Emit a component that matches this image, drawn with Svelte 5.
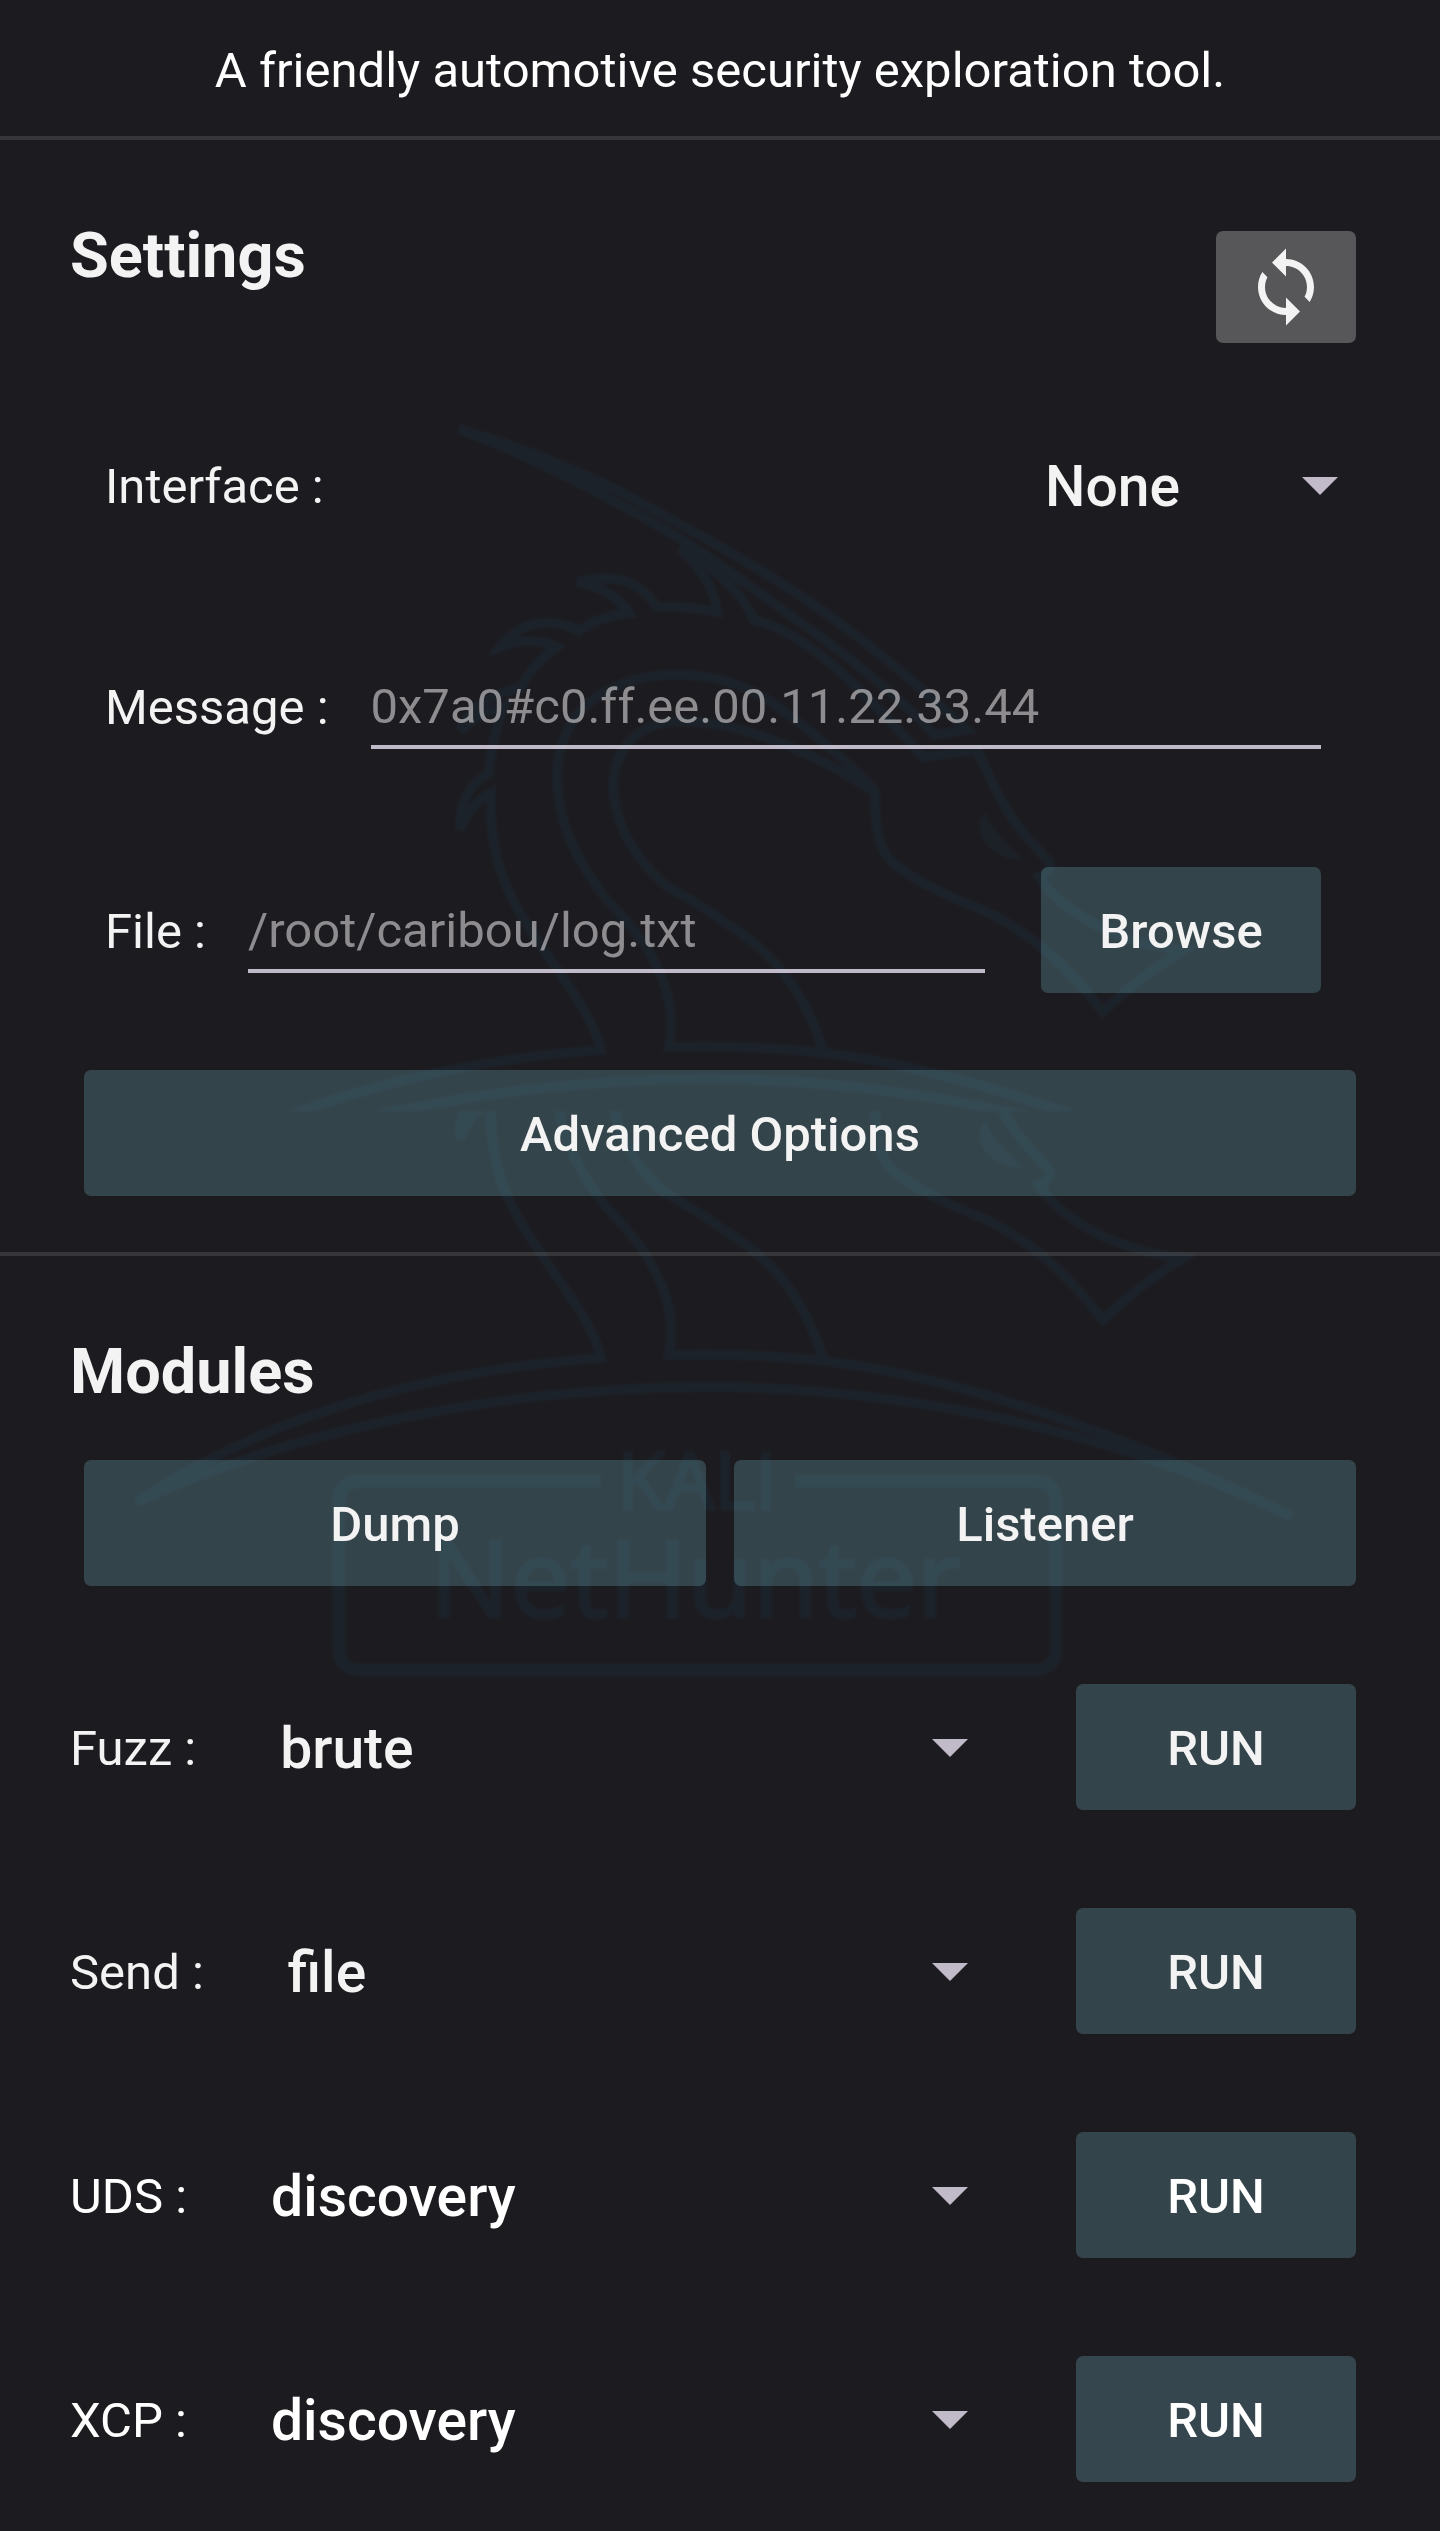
<script>
  const modules = [
    { id: 'fuzz', label: 'Fuzz :', options: ['brute', 'identify', 'mutate', 'random'] },
    { id: 'send', label: 'Send :', options: ['file', 'message'] },
    { id: 'uds', label: 'UDS :', options: ['discovery', 'services', 'testerpresent'] },
    { id: 'xcp', label: 'XCP :', options: ['discovery', 'info', 'dump'] }
  ];
</script>

{#snippet picker(id, options)}
  <span class="picker">
    <select {id}>
      {#each options as option}
        <option>{option}</option>
      {/each}
    </select>
    <svg class="arrow" viewBox="0 0 36 18" aria-hidden="true"><path d="M0 0h36L18 18z" /></svg>
  </span>
{/snippet}

<div class="page">
  <header>A friendly automotive security exploration tool.</header>

  <section>
    <div class="head">
      <h2>Settings</h2>
      <button class="refresh" aria-label="Refresh">
        <svg viewBox="0 0 24 24" aria-hidden="true">
          <path d="M12 4V1L8 5l4 4V6c3.31 0 6 2.69 6 6 0 1.01-.25 1.97-.7 2.8l1.46 1.46C19.54 15.03 20 13.57 20 12c0-4.42-3.58-8-8-8zm0 14c-3.31 0-6-2.69-6-6 0-1.01.25-1.97.7-2.8L5.24 7.74C4.46 8.97 4 10.43 4 12c0 4.42 3.58 8 8 8v3l4-4-4-4v3z" />
        </svg>
      </button>
    </div>

    <div class="fields">
      <div class="row interface">
        <label for="interface">Interface :</label>
        {@render picker('interface', ['None', 'can0', 'vcan0'])}
      </div>
      <div class="row">
        <label for="message">Message :</label>
        <input id="message" type="text" placeholder="0x7a0#c0.ff.ee.00.11.22.33.44" />
      </div>
      <div class="row">
        <label for="file">File :</label>
        <input id="file" type="text" placeholder="/root/caribou/log.txt" />
        <button class="action browse">Browse</button>
      </div>
    </div>

    <div class="buttons"><button class="action">Advanced Options</button></div>
  </section>

  <section>
    <h2>Modules</h2>
    <div class="buttons tools">
      <button class="action">Dump</button>
      <button class="action">Listener</button>
    </div>
    <div class="modules">
      {#each modules as module}
        <div class="row">
          <label for={module.id}>{module.label}</label>
          {@render picker(module.id, module.options)}
          <button class="action">RUN</button>
        </div>
      {/each}
    </div>
  </section>

  <svg class="watermark" viewBox="0 0 1440 2531" aria-hidden="true">
    <defs>
      <clipPath id="upper"><rect width="1440" height="1111" /></clipPath>
      <clipPath id="lower"><rect y="1111" width="1440" height="1420" /></clipPath>
      <g id="dragon">
        <path d="M459 429C514 445 590 473 650 508C721 546 762 570 804 598C867 641 917 684 967 730L935 735C890 688 840 650 794 618C756 590 716 562 679 538C610 497 540 460 459 429Z" />
        <path d="M679 549C709 563 740 588 754 620C804 631 860 686 923 757L977 750C992 783 1005 812 1024 834Q1037 848 1050 863Q1052 871 1039 877C1059 909 1114 943 1183 950Q1140 976 1103 1012C1062 959 1027 932 987 912C951 897 921 885 893 863C877 848 875 825 875 791C860 774 821 737 771 702C723 670 651 665 603 693C566 714 557 752 557 777C557 822 579 865 607 900C636 930 651 951 662 978Q675 1009 669 1047C726 1045 778 1048 824 1053C801 979 763 945 721 920C701 904 680 895 664 884C633 856 613 822 613 782C617 741 644 722 680 721C751 722 825 760 873 791" />
        <path d="M824 1053C950 1068 1120 1122 1292 1209C1121 1124 902 1079 707 1079C500 1079 285 1124 137 1194C249 1119 402 1064 601 1050C593 1012 550 963 527 924C499 882 489 842 491 793Q471 803 460 830Q459 789 489 773C491 747 495 729 504 706Q479 713 460 731Q475 696 521 688Q529 668 557 647Q531 635 500 647C520 620 553 617 579 631Q600 616 629 613Q612 588 577 582C619 572 641 583 657 607Q689 606 717 612Q713 577 679 549" />
        <path class="eye" d="M985 812C992 830 1009 846 1023 860C1000 861 976 844 980 821Z" />
      </g>
    </defs>
    <g clip-path="url(#upper)"><use href="#dragon" /></g>
    <g clip-path="url(#lower)"><use href="#dragon" y="308" /></g>
    <path class="frame" d="M600 1481H361Q339 1481 339 1503V1648Q339 1670 361 1670H1034Q1056 1670 1056 1648V1503Q1056 1481 1034 1481H795" />
    <text x="697" y="1509" font-size="78">KALI</text>
    <text x="695" y="1617" font-size="107">NetHunter</text>
  </svg>
</div>

<style>
  :global(body) {
    margin: 0;
    background: #1c1b1f;
  }
  .page {
    position: relative;
    background: #1c1b1f;
    color: #f3f3f3;
    font: 49px/58px Roboto, sans-serif;
  }
  header {
    padding: 42px 70px 36px;
    border-bottom: 4px solid #363538;
    color: #fff;
    text-align: center;
  }
  section {
    padding: 91px 84px 56px 70px;
  }
  section + section {
    border-top: 4px solid #363538;
    padding-bottom: 49px;
  }
  h2 {
    margin: 0;
    font-size: 63px;
    line-height: 50px;
    font-weight: 700;
  }
  .head {
    display: flex;
    justify-content: space-between;
    align-items: flex-start;
  }
  button {
    border: 0;
    padding: 0;
    border-radius: 7px;
    color: inherit;
    font: 500 49px/58px Roboto, sans-serif;
  }
  .refresh {
    display: flex;
    align-items: center;
    justify-content: center;
    width: 140px;
    height: 112px;
    background: #575759;
  }
  .refresh svg {
    width: 84px;
    height: 84px;
    fill: #f3f3f3;
  }
  .action {
    height: 126px;
    padding-top: 4px;
    background: #34444b;
  }
  .fields,
  .modules {
    display: flex;
    flex-direction: column;
    gap: 98px;
  }
  .fields {
    margin: 76px 35px 77px;
  }
  .row {
    display: flex;
    align-items: center;
    height: 126px;
  }
  label {
    flex: none;
    padding-top: 4px;
    white-space: nowrap;
  }
  input {
    flex: 1;
    min-width: 0;
    height: 86px;
    box-sizing: border-box;
    margin-left: 42px;
    padding: 4px 0 0;
    border: 0;
    border-bottom: 4px solid #c1bac8;
    background: none;
    color: inherit;
    font: inherit;
    outline: 0;
  }
  input::placeholder {
    color: #8e8c8f;
    opacity: 1;
  }
  .browse {
    width: 280px;
    margin-left: 56px;
  }
  .interface {
    justify-content: space-between;
    height: 132px;
    margin: 0 -17px -6px 0;
  }
  .picker {
    display: grid;
    align-items: center;
  }
  .picker > * {
    grid-area: 1 / 1;
  }
  select {
    width: 100%;
    height: 84px;
    padding: 4px 0 0;
    border: 0;
    appearance: none;
    background: none;
    color: inherit;
    font: 500 57px/66px Roboto, sans-serif;
  }
  .arrow {
    justify-self: end;
    width: 36px;
    height: 18px;
    margin-top: 2px;
    fill: #c1bac8;
    pointer-events: none;
  }
  .interface .picker {
    width: 293px;
  }
  .buttons {
    display: grid;
    margin-left: 14px;
  }
  .tools {
    grid-template-columns: 1fr 1fr;
    gap: 28px;
    margin-top: 63px;
    margin-bottom: 98px;
  }
  .modules .picker {
    flex: 1;
    margin: 0 108px 0 84px;
  }
  .modules .action {
    width: 280px;
  }
  .modules .row:nth-child(n + 3) {
    color: #fff;
  }
  .modules .row:last-child .action {
    background: #36464e;
  }
  .watermark {
    position: absolute;
    top: 0;
    left: 0;
    width: 100%;
    pointer-events: none;
    mix-blend-mode: screen;
    filter: blur(1px);
    fill: none;
    stroke: #00080c;
    stroke-width: 10px;
  }
  .watermark .frame {
    stroke-width: 13px;
  }
  .watermark .eye {
    fill: #00070a;
    stroke: none;
  }
  .watermark text {
    fill: #00080c;
    stroke-width: 3px;
    font-family: 'Open Sans', sans-serif;
    text-anchor: middle;
  }
</style>
